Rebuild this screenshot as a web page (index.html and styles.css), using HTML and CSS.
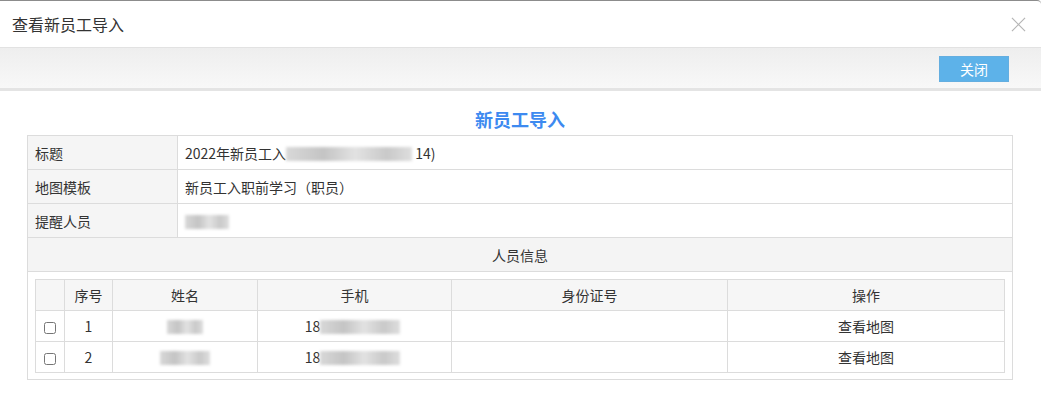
FILE: index.html
```html
<!DOCTYPE html>
<html lang="zh-CN">
<head>
    <meta charset="UTF-8">
    <title>查看新员工导入</title>
    <link rel="stylesheet" href="styles.css">
</head>
<body>
    <div class="dialog">
        <div class="dialog-header">
            <span class="dialog-title">查看新员工导入</span>
            <svg class="close-x" width="16" height="16" viewBox="0 0 16 16">
                <path d="M1 1 L15 15 M15 1 L1 15" stroke="#b5b5b5" stroke-width="1.3" fill="none"/>
            </svg>
        </div>

        <div class="toolbar">
            <button class="btn-close">关闭</button>
        </div>

        <div class="content">
            <h2 class="form-title">新员工导入</h2>

            <table class="info-table">
                <tr>
                    <td class="label">标题</td>
                    <td>2022年新员工入<span class="mask" style="width:126px"></span> 14)</td>
                </tr>
                <tr>
                    <td class="label">地图模板</td>
                    <td>新员工入职前学习（职员）</td>
                </tr>
                <tr>
                    <td class="label">提醒人员</td>
                    <td><span class="mask" style="width:44px"></span></td>
                </tr>
                <tr>
                    <td class="section" colspan="2">人员信息</td>
                </tr>
                <tr>
                    <td class="inner-wrap" colspan="2">
                        <table class="staff-table">
                            <tr>
                                <th class="c-check"></th>
                                <th class="c-no">序号</th>
                                <th class="c-name">姓名</th>
                                <th class="c-phone">手机</th>
                                <th class="c-id">身份证号</th>
                                <th>操作</th>
                            </tr>
                            <tr>
                                <td><input type="checkbox"></td>
                                <td>1</td>
                                <td><span class="mask" style="width:36px"></span></td>
                                <td class="phone">18<span class="mask" style="width:80px"></span></td>
                                <td></td>
                                <td>查看地图</td>
                            </tr>
                            <tr>
                                <td><input type="checkbox"></td>
                                <td>2</td>
                                <td><span class="mask" style="width:50px"></span></td>
                                <td class="phone">18<span class="mask" style="width:80px"></span></td>
                                <td></td>
                                <td>查看地图</td>
                            </tr>
                        </table>
                    </td>
                </tr>
            </table>
        </div>
    </div>
</body>
</html>
```

FILE: styles.css
```css
* {
    margin: 0;
    padding: 0;
    box-sizing: border-box;
}

body {
    background: #fff;
    color: #333;
    font-family: "Noto Sans CJK SC", "Liberation Sans", sans-serif;
    font-size: 14px;
}

.dialog {
    width: 1041px;
    height: 398px;
    border-top: 1px solid #8c8c8c;
    border-top-right-radius: 4px;
    background: #fff;
}

.dialog-header {
    height: 47px;
    display: flex;
    align-items: center;
    justify-content: space-between;
    padding: 0 15px 0 12px;
    border-bottom: 1px solid #e2e2e2;
}

.dialog-title {
    font-size: 16px;
    color: #333;
}

.close-x {
    display: block;
    width: 15px;
    height: 15px;
}

.toolbar {
    height: 43px;
    display: flex;
    align-items: flex-start;
    justify-content: flex-end;
    padding: 8px 32px 0 0;
    background: linear-gradient(#eeeeee, #f8f8f8);
    border-bottom: 3px solid #e4e4e4;
}

.btn-close {
    width: 70px;
    height: 26px;
    border: 1px solid #64aee0;
    background: #5db2e9;
    color: #fff;
    font-family: inherit;
    font-size: 14px;
}

.content {
    padding: 0 28px 0 27px;
}

.form-title {
    text-align: center;
    color: #3d8af0;
    font-size: 18px;
    font-weight: bold;
    height: 44px;
    padding-top: 16px;
    line-height: 24px;
}

.info-table {
    width: 986px;
    border-collapse: collapse;
    border: 1px solid #dcdcdc;
}

.info-table td {
    height: 34px;
    border: 1px solid #dcdcdc;
    padding: 0 7px;
    vertical-align: middle;
    line-height: 16px;
}

.info-table td.label {
    width: 150px;
    background: #f5f5f5;
}

.info-table td.section {
    background: #f4f4f4;
    text-align: center;
}

.info-table td.inner-wrap {
    padding: 7px 7px 6px 7px;
    height: auto;
}

.mask {
    display: inline-block;
    height: 14px;
    vertical-align: -2px;
    background: linear-gradient(90deg, #d8d8d8, #c4c4c4 30%, #e2e2e2 55%, #c9c9c9 80%, #dedede);
    filter: blur(1.5px);
}

.staff-table {
    width: 970px;
    border-collapse: collapse;
}

.staff-table th,
.staff-table td {
    height: 31px;
    border: 1px solid #dcdcdc;
    text-align: center;
    font-weight: normal;
    line-height: 16px;
}

.staff-table th {
    background: #f6f6f6;
}

.staff-table td.phone {
    padding-left: 3px;
}

.c-check { width: 29px; }
.c-no { width: 48px; }
.c-name { width: 145px; }
.c-phone { width: 194px; }
.c-id { width: 276px; }

.staff-table input {
    width: 12px;
    height: 12px;
    vertical-align: middle;
}
```
